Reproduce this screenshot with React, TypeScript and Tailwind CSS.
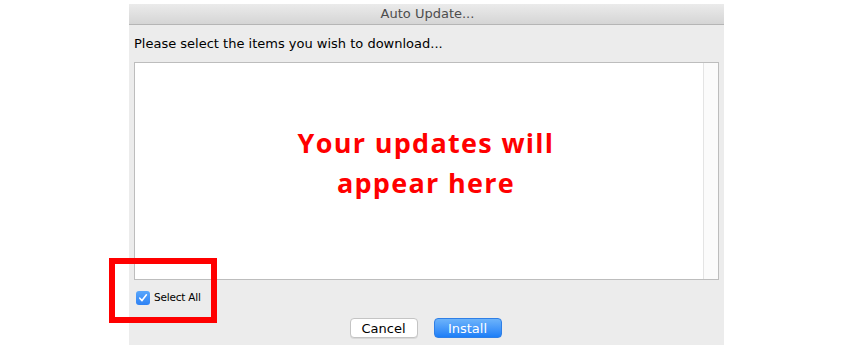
import React from "react";

export default function App() {
  return (
    <div className="w-[852px] h-[350px] bg-white flex pl-[129px] pt-[4px]">
      <div className="w-[595px] h-[341px] bg-[#ececec] flex flex-col" style={{ fontFamily: '"DejaVu Sans", "Liberation Sans", sans-serif' }}>
        <div className="h-[21px] bg-gradient-to-b from-[#ebebeb] to-[#d5d5d5] border-b border-[#b5b5b5] flex items-center justify-center text-[13px] text-[#4d4d4d] pl-[2px]">
          Auto Update...
        </div>
        <div className="pl-[5px] pt-[11px] text-[13px] text-black leading-[16px] h-[37px]">
          Please select the items you wish to download...
        </div>
        <div className="ml-[5px] w-[585px] h-[218px] bg-white border border-[#bdbdbd] flex">
          <div className="flex-1 flex flex-col items-center justify-center pb-[16px] pl-[14px]">
            <div
              className="text-[#ff0000] font-bold text-[27px] leading-[40px] tracking-[1.3px] text-center"
              style={{ fontFamily: '"Open Sans", "Noto Sans", sans-serif' }}
            >
              <div>Your updates will</div>
              <div>appear here</div>
            </div>
          </div>
          <div className="w-[15px] bg-[#fbfbfb] border-l border-[#e4e4e4]" />
        </div>
        <div className="relative h-[36px] flex items-center pl-[7px]">
          <div className="absolute left-[-20px] top-[-22px] w-[108px] h-[65px] border-[6px] border-[#ff0000]" />
          <div className="w-[14px] h-[14px] rounded-[3px] bg-gradient-to-b from-[#5aa7fb] to-[#2e82f4] flex items-center justify-center">
            <svg width="10" height="10" viewBox="0 0 10 10">
              <path d="M1.8 5.2 L4 7.6 L8.4 1.8" fill="none" stroke="white" strokeWidth="1.6" strokeLinecap="round" strokeLinejoin="round" />
            </svg>
          </div>
          <span className="ml-[4px] text-[10.5px] tracking-[-0.2px] text-black">Select All</span>
        </div>
        <div className="flex justify-center gap-[16px] pr-[2px] pt-[2px]">
          <button className="w-[68px] h-[20px] rounded-[4px] bg-white border border-[#c4c4c4] shadow-[0_1px_0_rgba(0,0,0,0.08)] text-[13px] text-black leading-none flex items-center justify-center">
            Cancel
          </button>
          <button className="w-[68px] h-[20px] rounded-[4px] bg-gradient-to-b from-[#6cb3fa] to-[#1b7ef7] border border-[#2f7fe6] text-[13px] text-white leading-none flex items-center justify-center">
            Install
          </button>
        </div>
      </div>
    </div>
  );
}
